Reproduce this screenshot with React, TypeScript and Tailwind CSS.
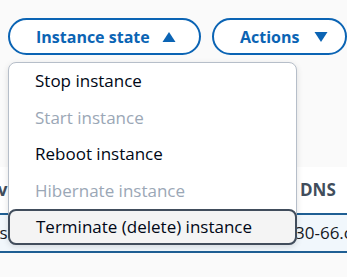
import { useState } from 'react';

const items = [
  { label: 'Stop instance', disabled: false },
  { label: 'Start instance', disabled: true },
  { label: 'Reboot instance', disabled: false },
  { label: 'Hibernate instance', disabled: true },
  { label: 'Terminate (delete) instance', disabled: false },
];

function Caret({ up }: { up?: boolean }) {
  return (
    <svg className="h-[12px] w-[14px] shrink-0" viewBox="0 0 14 12" fill="currentColor">
      {up ? <path d="M7 1 L13.5 11 H0.5 Z" /> : <path d="M0.5 1 H13.5 L7 11 Z" />}
    </svg>
  );
}

export default function App() {
  const [active] = useState(4);
  return (
    <div
      className="relative w-[347px] h-[277px] overflow-hidden bg-[#fafafa]"
      style={{ fontFamily: '"Open Sans", "Noto Sans", sans-serif' }}
    >
      {/* toolbar */}
      <div className="flex items-center gap-[11px] pl-[8px] pt-[18px]">
        <button className="flex items-center justify-between shrink-0 whitespace-nowrap w-[193px] h-[37px] pl-[26px] pr-[23px] rounded-full border-2 border-[#0b64b4] text-[#0b64b4] text-[16px] font-bold bg-white">
          Instance state
          <Caret up />
        </button>
        <button className="flex items-center justify-between shrink-0 whitespace-nowrap w-[135px] h-[37px] pl-[26px] pr-[17px] rounded-full border-2 border-[#0b64b4] text-[#0b64b4] text-[16px] font-bold bg-white">
          Actions
          <Caret />
        </button>
      </div>

      {/* table behind the menu */}
      <div className="mt-[112px] bg-white whitespace-nowrap">
        <div className="flex items-center h-[46px] text-[17px] font-bold text-[#414d5c]">
          <span className="shrink-0 w-[314px] -ml-[14px]">Av</span>
          <span className="shrink-0">DNS</span>
        </div>
        <div className="flex items-center h-[40px] border-y-2 border-[#1f5f94] bg-[#f1f7fc] text-[17px] text-[#16191f]">
          <span className="shrink-0 w-[306px] -ml-[11px]">us</span>
          <span className="shrink-0">30-66.compute</span>
        </div>
      </div>

      {/* dropdown menu */}
      <div className="absolute left-[8px] top-[62px] w-[289px] bg-white border border-[#b6bec9] rounded-lg shadow-[0_2px_6px_rgba(0,0,0,0.12)]">
        {items.map((it, i) => (
          <div
            key={it.label}
            className={
              'flex items-center whitespace-nowrap h-[36.4px] pl-[26px] text-[17px] ' +
              (it.disabled ? 'text-[#9ba7b6] ' : 'text-[#000716] ') +
              (i === active ? '-mx-px -mb-px border-2 border-[#414d5c] rounded-lg bg-[#f4f4f4] pl-[25px]' : '')
            }
          >
            {it.label}
          </div>
        ))}
      </div>
    </div>
  );
}
